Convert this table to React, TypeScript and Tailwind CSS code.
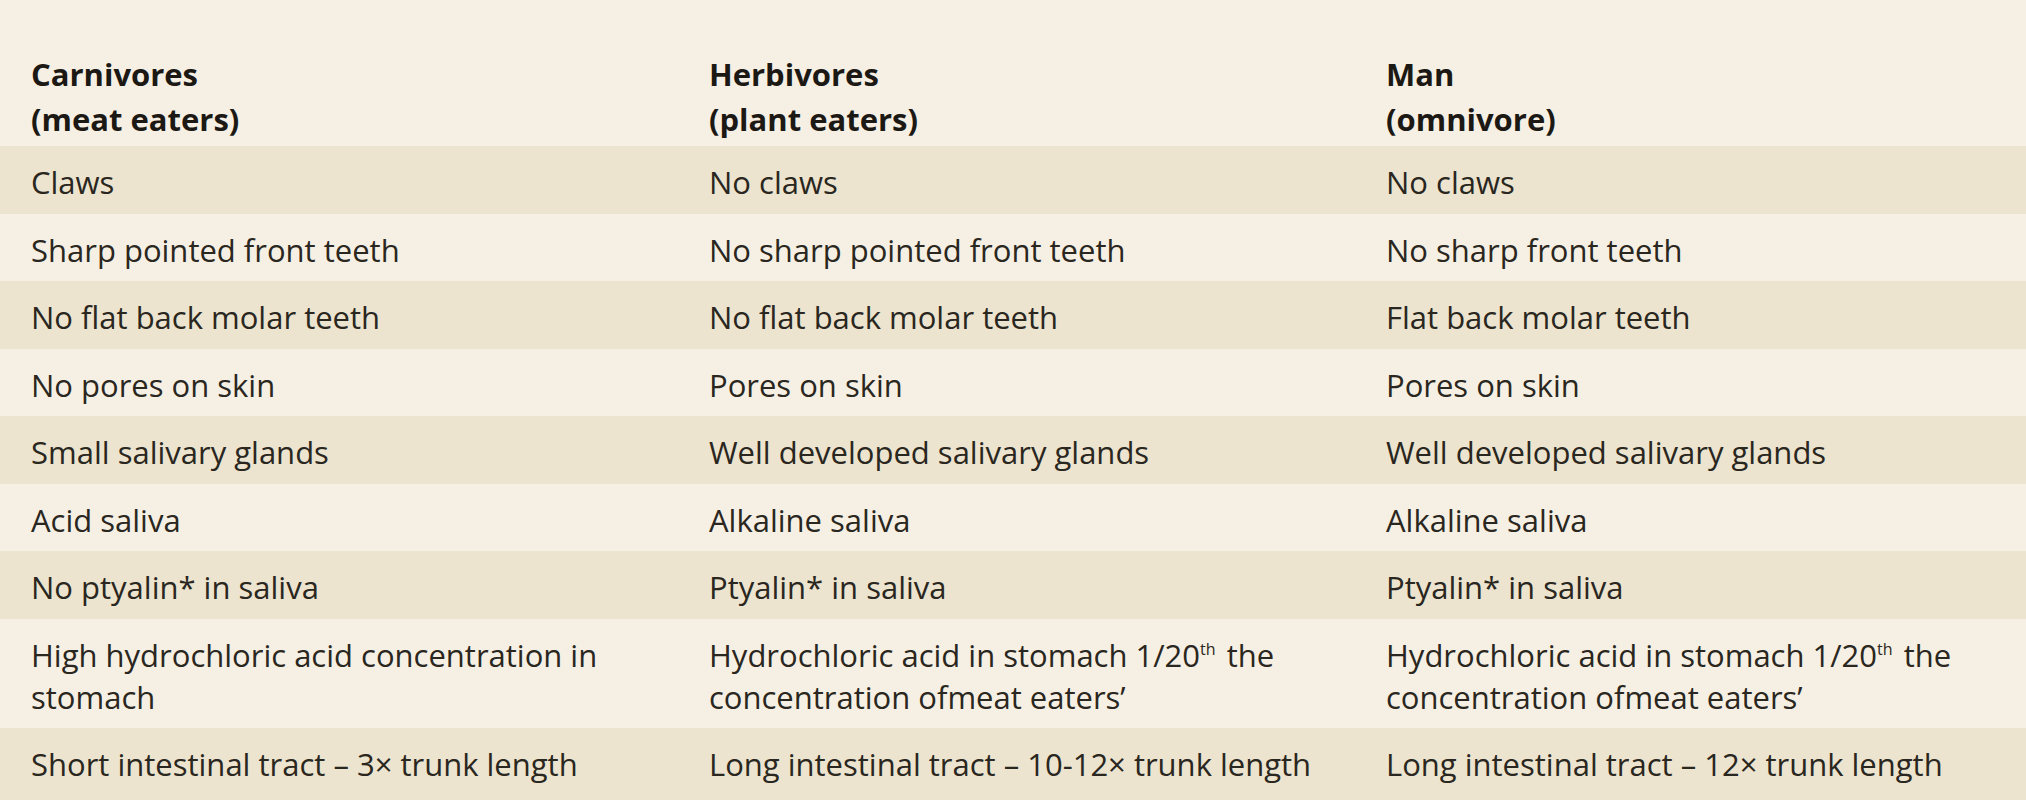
const rows: [string, React.ReactNode, React.ReactNode][] = [
  ["Claws", "No claws", "No claws"],
  ["Sharp pointed front teeth", "No sharp pointed front teeth", "No sharp front teeth"],
  ["No flat back molar teeth", "No flat back molar teeth", "Flat back molar teeth"],
  ["No pores on skin", "Pores on skin", "Pores on skin"],
  ["Small salivary glands", "Well developed salivary glands", "Well developed salivary glands"],
  ["Acid saliva", "Alkaline saliva", "Alkaline saliva"],
  ["No ptyalin* in saliva", "Ptyalin* in saliva", "Ptyalin* in saliva"],
  [
    "High hydrochloric acid concentration in stomach",
    <>
      Hydrochloric acid in stomach 1/20<sup className="text-[16px] leading-none -top-[12px] mr-[3px]">th</sup> the concentration ofmeat eaters’
    </>,
    <>
      Hydrochloric acid in stomach 1/20<sup className="text-[16px] leading-none -top-[12px] mr-[3px]">th</sup> the concentration ofmeat eaters’
    </>,
  ],
  ["Short intestinal tract – 3× trunk length", "Long intestinal tract – 10-12× trunk length", "Long intestinal tract – 12× trunk length"],
];

const font = { fontFamily: '"Open Sans", "Noto Sans", sans-serif' };

export default function App() {
  return (
    <div className="min-h-screen bg-[#f6f0e4] text-[#2a2620] text-[31px]" style={font}>
      {/* header */}
      <div className="grid grid-cols-[678px_677px_1fr] font-bold leading-[45px] text-[#1c1915] pt-[51.5px] pb-[4.5px]">
        <div className="pl-[31px] pr-2">
          Carnivores
          <br />
          (meat eaters)
        </div>
        <div className="pl-[31px] pr-2">
          Herbivores
          <br />
          (plant eaters)
        </div>
        <div className="pl-[31px] pr-2">
          Man
          <br />
          (omnivore)
        </div>
      </div>

      {rows.map((r, i) => (
        <div
          key={i}
          className={`grid grid-cols-[678px_677px_1fr] leading-[42px] pt-[15px] ${i === rows.length - 1 ? "pb-[40px]" : "pb-[10.5px]"} ${
            i % 2 === 0 ? "bg-[#ece4cf]" : "bg-[#f6f0e4]"
          }`}
        >
          {r.map((c, j) => (
            <div key={j} className="pl-[31px] pr-2">
              {c}
            </div>
          ))}
        </div>
      ))}
    </div>
  );
}
